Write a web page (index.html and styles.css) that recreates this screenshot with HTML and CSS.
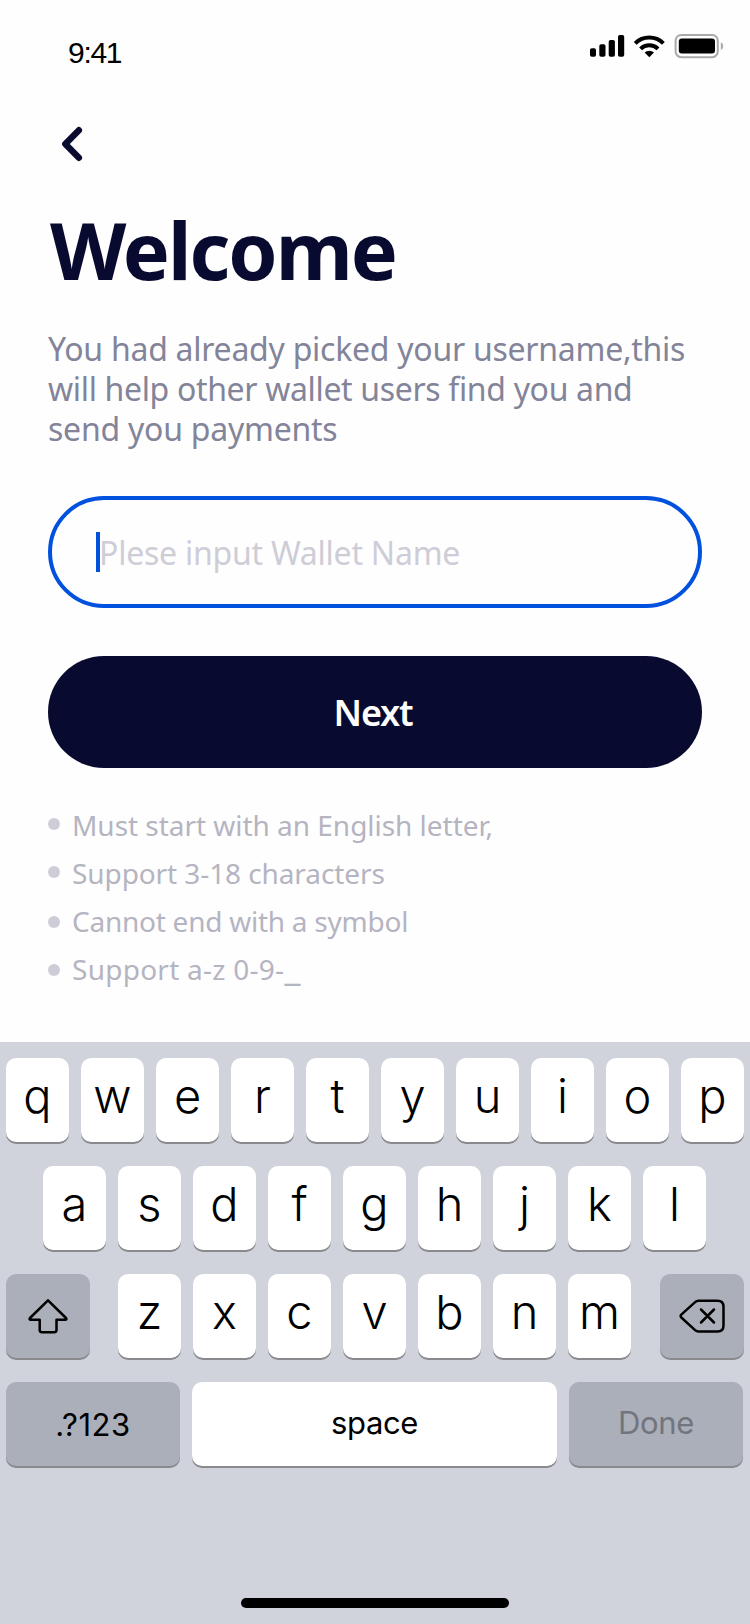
FILE: index.html
```
<!DOCTYPE html>
<html lang="en">
<head>
<meta charset="utf-8">
<title>Welcome</title>
<link rel="stylesheet" href="styles.css">
</head>
<body>
<div class="screen">
  <header class="status">
    <span class="time">9:41</span>
    <svg class="status-icons" width="136" height="28" viewBox="588 32 136 28">
      <rect x="590" y="48.3" width="6" height="8.4" rx="1.8"/>
      <rect x="599.3" y="44.2" width="6.2" height="12.5" rx="1.8"/>
      <rect x="608.7" y="40" width="6.2" height="16.7" rx="1.8"/>
      <rect x="618" y="35" width="6.2" height="21.7" rx="1.8"/>
      <g class="waves">
        <path d="M635.2 43.3a20 20 0 0 1 28.2 0"/>
        <path d="M640.6 48.8a12.3 12.3 0 0 1 17.4 0"/>
      </g>
      <path d="M644.6 52.6a6.9 6.9 0 0 1 9.4 0l-4.7 4.6z"/>
      <rect class="shell" x="675.6" y="35" width="42.2" height="22.2" rx="5.6"/>
      <rect x="678.8" y="38.4" width="36.2" height="15.2" rx="3"/>
      <path class="tip" d="M720.8 42.3c3.2 1.3 3.2 6.4 0 7.7z"/>
    </svg>
  </header>
  <main class="content">
    <svg class="back" width="30" height="40" viewBox="58 124 30 40"><path d="M78.9 130.2 65.3 144 78.9 157.8"/></svg>
    <h1 class="title">Welcome</h1>
    <p class="intro">
      <span class="line l1">You had already picked your username,this</span>
      <span class="line l2">will help other wallet users find you and</span>
      <span class="line l3">send you payments</span>
    </p>
    <div class="field"><span class="caret"></span><span class="placeholder">Plese input Wallet Name</span></div>
    <div class="next"><span>Next</span></div>
    <ul class="rules">
      <li><i></i><span class="r1">Must start with an English letter,</span></li>
      <li><i></i><span class="r2">Support 3-18 characters</span></li>
      <li class="low"><i></i><span class="r3">Cannot end with a symbol</span></li>
      <li class="low"><i></i><span class="r4">Support a-z 0-9-<span class="underscore">_</span></span></li>
    </ul>
  </main>
  <section class="keyboard">
    <div class="row"><b>q</b><b>w</b><b>e</b><b>r</b><b>t</b><b>y</b><b>u</b><b>i</b><b>o</b><b>p</b></div>
    <div class="row middle"><b>a</b><b>s</b><b>d</b><b>f</b><b>g</b><b>h</b><b>j</b><b>k</b><b>l</b></div>
    <div class="row spread">
      <b class="dark side"><svg width="44" height="38" viewBox="26.500 1297 44 38"><path d="M48.5 1300.3 66.5 1318c.9 1 .4 1.8-.7 1.8H57v10.200q0 2.200-2.200 2.200H42.400q-2.200 0-2.200-2.200V1319.800H31.200c-1.100 0-1.600-.8-.7-1.800z"/></svg></b>
      <div class="group"><b>z</b><b>x</b><b>c</b><b>v</b><b>b</b><b>n</b><b>m</b></div>
      <b class="dark side"><svg width="48" height="38" viewBox="677.500 1297 48 38"><path d="M698 1300.700H717q6 0 6 6V1325.500q0 6-6 6H698q-2 0-3.400-1.400L680.800 1317.500q-1.300-1.400 0-2.800L694.600 1302.100q1.400-1.400 3.400-1.400zM700.500 1309.500l13 13M713.500 1309.500l-13 13"/></svg></b>
    </div>
    <div class="row spread last">
      <b class="dark wide num">.?123</b>
      <b class="space">space</b>
      <b class="dark wide done">Done</b>
    </div>
    <div class="home"></div>
  </section>
</div>
</body>
</html>
```
FILE: styles.css
```
* { box-sizing: border-box; }
body { margin: 0; background: #fefefe; font-family: "Noto Sans", sans-serif; }
.screen { width: 750px; height: 1624px; display: flex; flex-direction: column; background: #fefefe; }
.status { height: 124px; padding: 32px 26px 0 68px; display: flex; justify-content: space-between; align-items: flex-start; }
.time { font: 30px/41px "Liberation Sans", sans-serif; color: #000; letter-spacing: -1.3px; }
.status-icons { display: block; }
.waves { fill: none; stroke: #000; stroke-width: 4; }
.shell { fill: none; stroke: #a9a9a9; stroke-width: 2; }
.tip { fill: #a9a9a9; }
.content { height: 918px; padding: 0 48px; display: flex; flex-direction: column; }
.back { display: block; margin-left: 10px; fill: none; stroke: #080a30; stroke-width: 6.4; stroke-linecap: round; stroke-linejoin: round; }
.title { margin: 38px 0 0 2px; font-size: 79px; line-height: 96px; font-weight: 700; color: #080a30; white-space: nowrap; letter-spacing: -2px; }
.intro { margin: 31px 0 0; font-size: 32px; line-height: 40px; color: #83849a; }
.line { display: block; white-space: nowrap; }
.l1 { letter-spacing: -.26px; }
.l2 { letter-spacing: -.34px; }
.l3 { letter-spacing: -.24px; }
.field { margin-top: 47px; height: 112px; border: 4px solid #0052de; border-radius: 56px; padding-left: 44px; display: flex; align-items: center; }
.caret { width: 4px; height: 40px; background: #0052de; }
.placeholder { margin-left: -1px; font-size: 32px; color: #cecdd7; white-space: nowrap; letter-spacing: -.23px; }
.next { margin-top: 48px; height: 112px; padding-right: 4px; border-radius: 56px; background: #080a30; color: #fff; display: flex; align-items: center; justify-content: center; font-size: 36px; font-weight: 600; letter-spacing: -1.2px; }
.rules { list-style: none; margin: 33px 0 0; padding: 0; font-size: 28px; line-height: 48px; color: #b5b4c1; }
.rules li { height: 48px; display: flex; gap: 12px; white-space: nowrap; }
.rules i { flex: none; width: 12px; height: 12px; margin-top: 17px; border-radius: 50%; background: #cecdd7; }
.rules .low i { margin-top: 19px; }
.r1 { letter-spacing: -.03px; }
.r2 { letter-spacing: -.09px; }
.r3 { letter-spacing: -.25px; }
.r4 { letter-spacing: .26px; }
.underscore { font-size: 36px; line-height: 1; }
.keyboard { height: 582px; background: #d0d3db; padding: 16px 6px 0; display: flex; flex-direction: column; gap: 24px; font-family: Inter, sans-serif; color: #000; }
.row, .group { display: flex; justify-content: center; gap: 12px; }
.middle, .group { padding-right: 1px; }
.spread { justify-content: space-between; }
.row b { width: 63px; height: 84px; border-radius: 10px; background: #fff; box-shadow: 0 2px 0 #898a8d; display: flex; align-items: center; justify-content: center; padding-bottom: 8px; font-size: 47px; line-height: 60px; font-weight: 350; }
.row .dark { background: #abafba; }
.row .side { width: 84px; padding: 0; }
.side svg { fill: none; stroke: #000; stroke-width: 2.5; stroke-linecap: round; stroke-linejoin: round; }
.last { padding: 0 1px 0 0; }
.row .wide { width: 174px; font-size: 31px; font-weight: 400; padding: 0; }
.row .num { padding-top: 2px; letter-spacing: .6px; }
.row .space { width: 365px; font-size: 31px; font-weight: 400; padding-bottom: 2px; letter-spacing: -.4px; }
.row .done { color: #71757d; padding-bottom: 2px; letter-spacing: -.3px; }
.home { width: 268px; height: 10px; margin: 108px auto 0; border-radius: 5px; background: #000; }
```
